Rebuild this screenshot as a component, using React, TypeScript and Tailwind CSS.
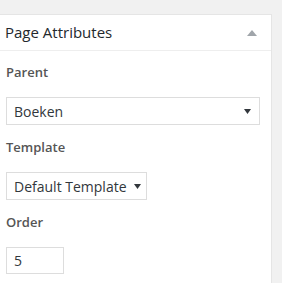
import React from 'react';

const Caret = () => (
  <svg width="7" height="5" viewBox="0 0 7 5" className="shrink-0">
    <path d="M0 0h7L3.5 5z" fill="#32373c" />
  </svg>
);

const App: React.FC = () => (
  <div className="w-[282px] h-[283px] bg-[#f1f1f1] pt-[14px] overflow-hidden" style={{ fontFamily: '"Open Sans", sans-serif' }}>
    <div className="w-[272px] h-[300px] bg-white border-t border-r border-[#e5e5e5]">
      {/* Header */}
      <div className="h-[36px] flex items-center justify-between pl-[5px] pr-[14px] border-b border-[#eeeeee]">
        <h2 className="text-[15px] text-[#23282d]">Page Attributes</h2>
        <svg width="10" height="6" viewBox="0 0 10 6">
          <path d="M0 6L5 0l5 6z" fill="#a0a5aa" />
        </svg>
      </div>

      <div className="pl-[6px] pr-[11px]">
        <p className="mt-[12px] text-[13px] font-semibold text-[#555] leading-[18px]">Parent</p>
        <div className="mt-[16px] h-[28px] border border-[#dddddd] flex items-center justify-between pl-[7px] pr-[8px] text-[14px] text-[#32373c]">
          <span>Boeken</span>
          <Caret />
        </div>

        <p className="mt-[13px] text-[13px] font-semibold text-[#555] leading-[18px]">Template</p>
        <div className="mt-[16px] w-[141px] h-[28px] border border-[#dddddd] flex items-center gap-[7px] pl-[7px] text-[14px] text-[#32373c]">
          <span>Default Template</span>
          <Caret />
        </div>

        <p className="mt-[13px] text-[13px] font-semibold text-[#555] leading-[18px]">Order</p>
        <div className="mt-[16px] w-[58px] h-[27px] border border-[#dddddd] flex items-center pl-[7px] text-[14px] text-[#32373c]">
          5
        </div>
      </div>
    </div>
  </div>
);

export default App;
